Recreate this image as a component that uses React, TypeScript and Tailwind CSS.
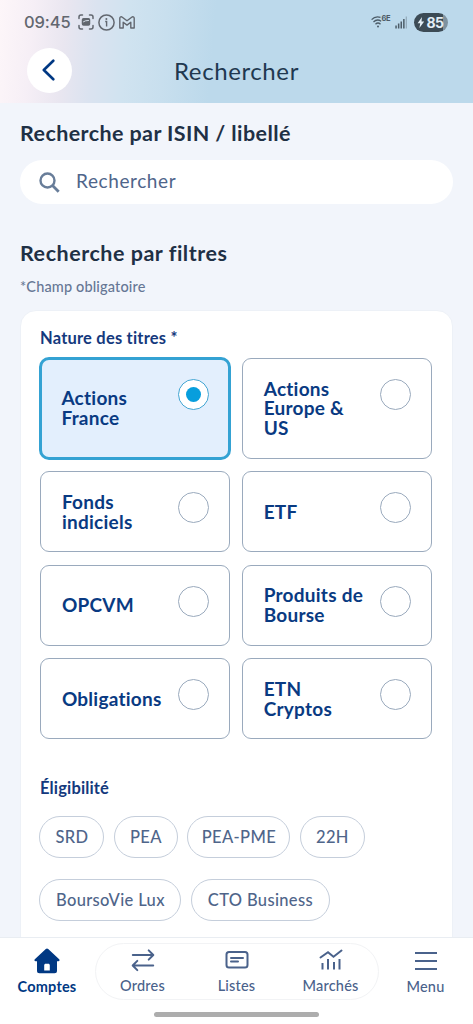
import { useState } from 'react'
import type { ReactNode } from 'react'
import clsx from 'clsx'

interface Nature {
  id: string
  label: string
}

const NATURES: Nature[] = [
  { id: 'actions-fr', label: 'Actions\nFrance' },
  { id: 'actions-eu', label: 'Actions\nEurope &\nUS' },
  { id: 'fonds', label: 'Fonds\nindiciels' },
  { id: 'etf', label: 'ETF' },
  { id: 'opcvm', label: 'OPCVM' },
  { id: 'produits', label: 'Produits de\nBourse' },
  { id: 'obligations', label: 'Obligations' },
  { id: 'etn', label: 'ETN\nCryptos' },
]

const ELIGIBILITY = [
  { label: 'SRD', width: 'w-[65px]' },
  { label: 'PEA', width: 'w-16' },
  { label: 'PEA-PME', width: 'w-[103px]' },
  { label: '22H', width: 'w-[65px]' },
  { label: 'BoursoVie Lux', width: 'w-[142px]' },
  { label: 'CTO Business', width: 'w-[139px]' },
]

function StatusBar() {
  return (
    <div className="flex h-11 items-center justify-between pl-6 pr-[25px] text-[#62676f]">
      <div className="flex items-center">
        <span className="w-[47px] font-[Inter] text-[16.5px] font-medium tracking-[-0.1px]">09:45</span>
        <svg className="ml-[7px]" width="16" height="16" viewBox="0 0 16 16" fill="none" stroke="currentColor" strokeWidth="1.5" strokeLinecap="round">
          <path d="M1 4.500V3a2 2 0 0 1 2-2h1.500M11.500 1H13a2 2 0 0 1 2 2v1.500M15 11.500V13a2 2 0 0 1-2 2h-1.500M4.500 15H3a2 2 0 0 1-2-2v-1.500" />
          <rect x="4.500" y="4.700" width="7" height="6.200" rx="1" fill="currentColor" />
          <path d="M5.500 7.800l2-1 3-.3" stroke="#d5dfea" strokeWidth="1" />
        </svg>
        <svg className="ml-1" width="17" height="17" viewBox="0 0 17 17" fill="none" stroke="currentColor" strokeWidth="1.5">
          <circle cx="8.500" cy="8.500" r="7.600" />
          <path d="M7.200 7.500h1.400v5" strokeWidth="1.400" />
          <circle cx="8.400" cy="4.900" r="1" fill="currentColor" stroke="none" />
        </svg>
        <svg className="ml-1" width="16" height="13" viewBox="0 0 16 13" fill="none" stroke="currentColor" strokeWidth="1.4" strokeLinejoin="round">
          <path d="M.8 12V2.200C.8.800 2.300.4 3.300 1.200L8 4.800l4.700-3.600c1-.8 2.500-.4 2.500 1V12h-3.400V6.200L8 9.100 4.200 6.200V12z" />
        </svg>
      </div>
      <div className="flex items-center text-[#4c5c68]">
        <div className="flex h-4 w-[20px]">
          <svg className="mt-[2px] shrink-0" width="13" height="12" viewBox="0 0 13 12" fill="none" stroke="currentColor" strokeWidth="1.3">
            <path d="M.6 3.700C3 .9 6.300.3 9.500 1.300M2.500 6c2-2 5-2.500 7.700-.8M4.500 8.200c1.500-1.500 3.500-1.500 5 0" />
            <circle cx="7" cy="10.400" r="1" fill="currentColor" stroke="none" />
          </svg>
          <span className="-ml-[2.5px] mt-px font-[Inter] text-[7.5px] leading-[8px] font-bold tracking-[-0.4px]">6E</span>
        </div>
        <svg className="ml-1" width="13" height="13" viewBox="0 0 13 13" fill="currentColor">
          <rect x="0.300" y="9.500" width="1.500" height="3" />
          <rect x="2.900" y="7.500" width="1.500" height="5" />
          <rect x="5.500" y="5.500" width="1.500" height="7" />
          <rect x="8.100" y="3" width="1.500" height="9.500" />
          <rect x="10.700" y="0.500" width="1.300" height="12" opacity=".35" />
        </svg>
        <div className="ml-[6px] flex h-[19px] w-[34px] items-center overflow-hidden rounded-full bg-linear-to-r from-[#3c4b55] from-86% to-[#7e929f] to-86% pl-[3px] text-[#e3eef5]">
          <svg width="8" height="11" viewBox="0 0 8 11" fill="currentColor">
            <path d="M5 0L.6 6.200h2.600L2.400 11l4.800-6.500H4.500z" />
          </svg>
          <span className="ml-[1.5px] font-[Inter] text-[14px] font-bold tracking-[-0.5px]">85</span>
        </div>
      </div>
    </div>
  )
}

function Header() {
  return (
    <header className="h-[103px] bg-[linear-gradient(95deg,#fdf6f9_0%,#f6eff6_7%,#e9e6f0_14%,#dbe3f0_20%,#d0e3f0_27%,#c8dfee_35%,#bcd9eb_45%,#bcd9eb_100%)]">
      <StatusBar />
      <div className="grid grid-cols-[1fr_auto_1fr] items-center px-[27px] pt-[3.5px]">
        <button aria-label="Retour" className="flex size-[45px] items-center justify-center rounded-full bg-white text-[#003883]">
          <svg className="-ml-[3px]" width="13" height="22" viewBox="0 0 13 22" fill="none" stroke="currentColor" strokeWidth="2.6" strokeLinecap="round" strokeLinejoin="round">
            <path d="M11.300 1.700L1.800 11l9.500 9.300" />
          </svg>
        </button>
        <h1 className="pt-[2px] text-[24px] tracking-[0.6px] text-[#1f3850]">Rechercher</h1>
      </div>
    </header>
  )
}

function NatureCard({ nature, selected, onSelect }: { nature: Nature; selected: boolean; onSelect: () => void }) {
  return (
    <button
      role="radio"
      aria-checked={selected}
      onClick={onSelect}
      className={clsx(
        'flex items-center justify-between text-left',
        selected
          ? '-m-px rounded-[10px] border-[3px] border-[#34a2d3] bg-[#e3effd] pl-[19px] pr-[19.5px]'
          : 'rounded-[9px] border border-[#9aaabd] bg-white px-[20.5px]',
      )}
    >
      <span className="whitespace-pre text-[19px] leading-[19.7px] font-bold tracking-[0.25px] text-[#093a82]">{nature.label}</span>
      <span
        className={clsx(
          'flex size-[31px] shrink-0 items-center justify-center self-start rounded-full border bg-white',
          selected ? 'mt-[19px] border-[#41a5d3]' : 'mt-5 border-[#9aaabd]',
        )}
      >
        {selected && <span className="size-[15px] rounded-full bg-[#079edd]" />}
      </span>
    </button>
  )
}

function NavItem({ label, active, children }: { label: string; active?: boolean; children: ReactNode }) {
  return (
    <a className={clsx('flex w-[94px] flex-col items-center', active ? 'font-bold text-[#003883]' : 'font-medium text-[#4a628b]')}>
      <span className="flex h-[26px] items-center justify-center">{children}</span>
      <span className="mt-[3px] text-[14.5px] leading-5 tracking-[0.2px]">{label}</span>
    </a>
  )
}

function BottomNav() {
  return (
    <nav className="h-[87px] border-t border-[#e9edf2] bg-white">
      <div className="flex pt-[5px]">
        <div className="w-[94.5px] pt-[5px]">
          <NavItem label="Comptes" active>
            <svg width="26" height="26" viewBox="0 0 26 26" fill="currentColor">
              <path fillRule="evenodd" d="M13 .5c.5 0 .8.2 1.200.500l11 10.300c.8.8.3 2-.8 2h-1.400v9.500c0 1.700-.8 2.500-2.500 2.500h-15C3.800 25.300 3 24.500 3 22.800v-9.500H1.600c-1.100 0-1.600-1.200-.8-2L11.800 1c.4-.3.700-.500 1.200-.5zM10.200 22.500h5.600v-5.200c0-1-.6-1.600-1.500-1.600h-2.600c-.9 0-1.500.6-1.500 1.600z" />
            </svg>
          </NavItem>
        </div>
        <div className="flex h-[57px] w-[284px] rounded-full border border-[#f2f3f5] pt-[3px]">
          <NavItem label="Ordres">
            <svg width="24" height="24" viewBox="0 0 24 24" fill="none" stroke="currentColor" strokeWidth="2" strokeLinecap="round" strokeLinejoin="round">
              <path d="M1.800 7h20.400M17.700 2.400L22.300 7l-4.600 4.600M22.200 17.500H1.800M6.300 12.900l-4.600 4.600 4.600 4.600" />
            </svg>
          </NavItem>
          <NavItem label="Listes">
            <svg width="24" height="20" viewBox="0 0 24 20" fill="none" stroke="currentColor" strokeWidth="2" strokeLinecap="round">
              <rect x="1.500" y="2" width="21" height="15.500" rx="2.500" />
              <path d="M6 8h12M6 11.500h7" />
            </svg>
          </NavItem>
          <NavItem label="Marchés">
            <svg width="24" height="22" viewBox="0 0 24 22" fill="none" stroke="currentColor" strokeWidth="2">
              <path d="M1.500 8.500L9 3.200l5.500 4.600L22.500 1.500" strokeLinecap="round" />
              <path d="M3.500 14v6.500M9 10v10.500M15 13v7.500M20.500 10v10.500" />
            </svg>
          </NavItem>
        </div>
        <div className="pt-[5px]">
          <NavItem label="Menu">
            <svg className="-mt-px" width="22" height="20" viewBox="0 0 22 20" fill="none" stroke="currentColor" strokeWidth="2.2">
              <path d="M0 2h22M0 10h22M0 18h22" />
            </svg>
          </NavItem>
        </div>
      </div>
      <div className="mx-auto mt-[12px] h-[5px] w-[165px] rounded-full bg-[#adadad]" />
    </nav>
  )
}

export default function App() {
  const [nature, setNature] = useState('actions-fr')

  return (
    <div className="flex h-[1024px] w-[473px] flex-col overflow-hidden bg-[#f2f5fb] font-[Lato,sans-serif]">
      <Header />

      <main className="min-h-0 flex-1 overflow-hidden px-5">
        <h2 className="mt-[15px] text-[21.5px] leading-[30px] font-bold tracking-[0.4px] text-[#1f3045]">Recherche par ISIN / libellé</h2>
        <label className="mt-3 flex h-11 items-center rounded-full bg-white pl-[19px]">
          <svg width="21" height="21" viewBox="0 0 21 21" fill="none" stroke="#687d99" strokeWidth="2.4">
            <circle cx="8.500" cy="8.500" r="7" />
            <path d="M13.500 13.500l6.200 6.200" strokeWidth="2.8" />
          </svg>
          <input
            type="text"
            placeholder="Rechercher"
            className="mb-[2px] ml-4 flex-1 text-[19px] tracking-[0.6px] outline-none placeholder:text-[#4f658a]"
          />
        </label>

        <h2 className="mt-[34px] text-[21.5px] leading-[30px] font-bold tracking-[0.52px] text-[#1f3045]">Recherche par filtres</h2>
        <p className="mt-[9px] text-[14.5px] leading-5 font-medium tracking-[0.15px] text-[#667795]">*Champ obligatoire</p>

        <section className="mt-[13px] h-[700px] rounded-2xl border border-[#edf1f7] bg-white px-[19px] pt-[17px]">
          <h3 className="text-[16.5px] leading-5 font-bold tracking-[0.2px] text-[#14397d]">Nature des titres *</h3>
          <div role="radiogroup" className="ml-[0.4px] mr-px mt-[9.7px] grid grid-cols-2 grid-rows-[101px_81px_81px_81px] gap-x-3 gap-y-[12.5px]">
            {NATURES.map(n => (
              <NatureCard key={n.id} nature={n} selected={n.id === nature} onSelect={() => setNature(n.id)} />
            ))}
          </div>

          <h3 className="mt-[39px] text-[16.5px] leading-5 font-bold tracking-[0.15px] text-[#14397d]">Éligibilité</h3>
          <div className="-ml-[0.6px] mt-[18px] flex flex-wrap gap-x-[9.5px] gap-y-[21px]">
            {ELIGIBILITY.map(e => (
              <button
                key={e.label}
                className={clsx('h-[42px] rounded-full border border-[#c5cedb] text-[16.5px] font-medium tracking-[0.35px] text-[#4f658a]', e.width)}
              >
                {e.label}
              </button>
            ))}
          </div>
        </section>
      </main>

      <BottomNav />
    </div>
  )
}
